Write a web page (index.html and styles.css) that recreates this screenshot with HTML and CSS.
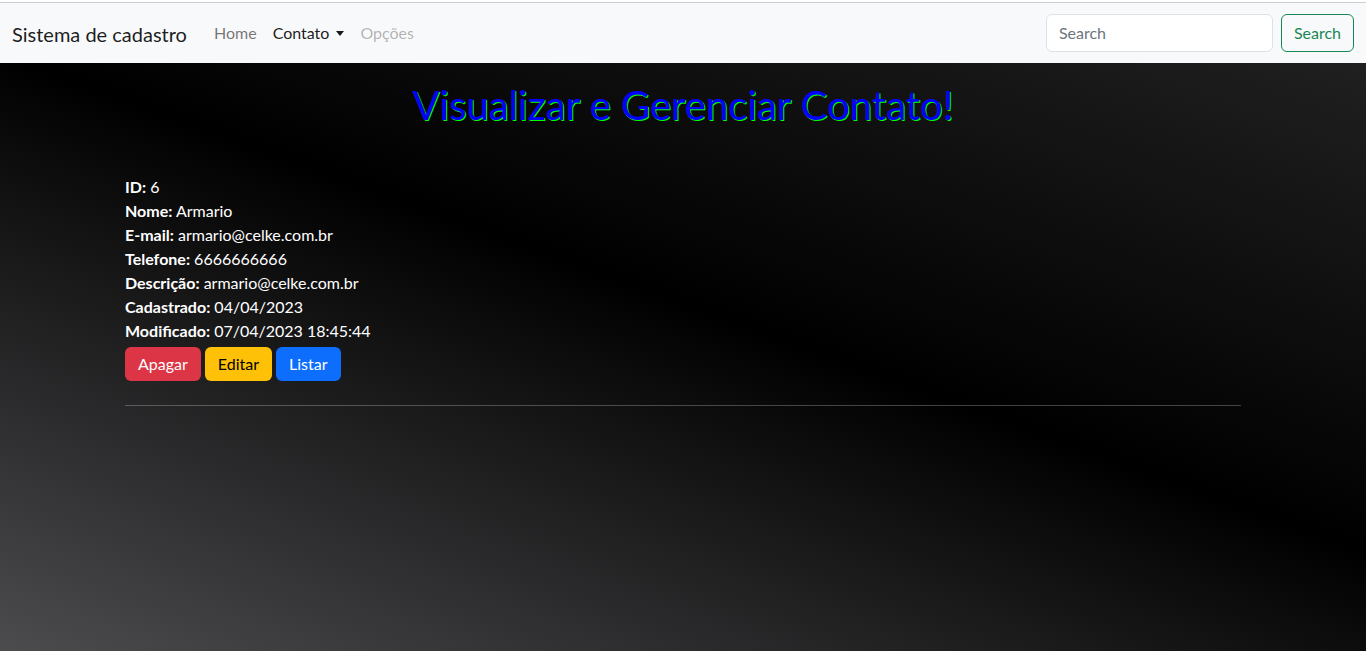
FILE: index.html
```html
<!DOCTYPE html>
<html lang="pt-BR">
<head>
<meta charset="utf-8">
<title>Sistema de cadastro</title>
<link rel="stylesheet" href="styles.css">
</head>
<body>
<div class="topline"></div>
<nav class="navbar">
  <div class="nav-left">
    <a class="brand" href="#">Sistema de cadastro</a>
    <ul class="nav-links">
      <li><a class="nav-link" href="#">Home</a></li>
      <li><a class="nav-link active dropdown" href="#">Contato</a></li>
      <li><a class="nav-link disabled" href="#">Opções</a></li>
    </ul>
  </div>
  <form class="search-form">
    <input class="search-input" type="search" placeholder="Search">
    <button class="search-btn" type="button">Search</button>
  </form>
</nav>
<main class="container">
  <h1 class="title">Visualizar e Gerenciar Contato!</h1>
  <div class="details">
    <div><strong>ID:</strong> 6</div>
    <div><strong>Nome:</strong> Armario</div>
    <div><strong>E-mail:</strong> armario@celke.com.br</div>
    <div><strong>Telefone:</strong> 6666666666</div>
    <div><strong>Descrição:</strong> armario@celke.com.br</div>
    <div><strong>Cadastrado:</strong> 04/04/2023</div>
    <div><strong>Modificado:</strong> 07/04/2023 18:45:44</div>
  </div>
  <div class="actions">
    <a class="btn btn-danger" href="#">Apagar</a>
    <a class="btn btn-warning" href="#">Editar</a>
    <a class="btn btn-primary" href="#">Listar</a>
  </div>
  <hr class="divider">
</main>
</body>
</html>
```

FILE: styles.css
```css
* { box-sizing: border-box; }
html, body { margin: 0; padding: 0; }
body {
  font-family: "Lato", "Noto Sans", sans-serif;
  font-size: 16px;
  line-height: 24px;
  color: #fff;
  min-height: 100vh;
  background: linear-gradient(20deg, #4c4c4f 0%, #000 52%, #242424 100%);
}
a { text-decoration: none; }
.topline {
  height: 3px;
  background: #fff;
  border-bottom: 1px solid #cfcfcf;
}
.navbar {
  height: 60px;
  background: #f8f9fa;
  display: flex;
  align-items: center;
  justify-content: space-between;
  padding: 0 12px;
}
.nav-left { display: flex; align-items: center; }
.brand {
  font-size: 20px;
  color: rgba(0,0,0,.9);
  margin-right: 19px;
  line-height: 30px;
  padding-top: 2px;
}
.nav-links { list-style: none; margin: 0; padding: 0; display: flex; }
.nav-link {
  display: block;
  padding: 8px;
  color: rgba(0,0,0,.55);
  font-size: 16px;
}
.nav-link.active { color: rgba(0,0,0,.9); }
.nav-link.disabled { color: rgba(0,0,0,.3); }
.dropdown::after {
  content: "";
  display: inline-block;
  margin-left: 7px;
  vertical-align: 3px;
  border-top: 5px solid;
  border-right: 4px solid transparent;
  border-left: 4px solid transparent;
}
.search-form { display: flex; align-items: center; gap: 8px; margin-top: -1px; }
.search-input {
  width: 227px;
  height: 38px;
  padding: 6px 12px;
  font-family: inherit;
  font-size: 16px;
  border: 1px solid #dee2e6;
  border-radius: 6px;
  background: #fff;
  color: #212529;
}
.search-input::placeholder { color: #6c757d; }
.search-btn {
  height: 38px;
  padding: 6px 12px;
  font-family: inherit;
  font-size: 16px;
  color: #198754;
  background: transparent;
  border: 1px solid #198754;
  border-radius: 6px;
}
.container {
  width: 1140px;
  margin: 0 auto;
  padding: 0 12px;
}
.title {
  margin: 18px 0 46px;
  font-size: 40px;
  line-height: 48px;
  font-weight: 400;
  text-align: center;
  color: #0000ff;
  text-shadow: 1px 1px 0 #00ff00;
}
.details strong { font-weight: 700; }
.actions { display: flex; gap: 4px; margin-top: 4px; }
.btn {
  display: inline-block;
  padding: 4px 12px;
  border: 1px solid transparent;
  border-radius: 6px;
  line-height: 24px;
  font-size: 16px;
}
.btn-danger { background: #dc3545; color: #fff; }
.btn-warning { background: #ffc107; color: #000; }
.btn-primary { background: #0d6efd; color: #fff; }
.divider {
  margin: 24px 0 0;
  border: 0;
  border-top: 1px solid rgba(255,255,255,.25);
}
```
